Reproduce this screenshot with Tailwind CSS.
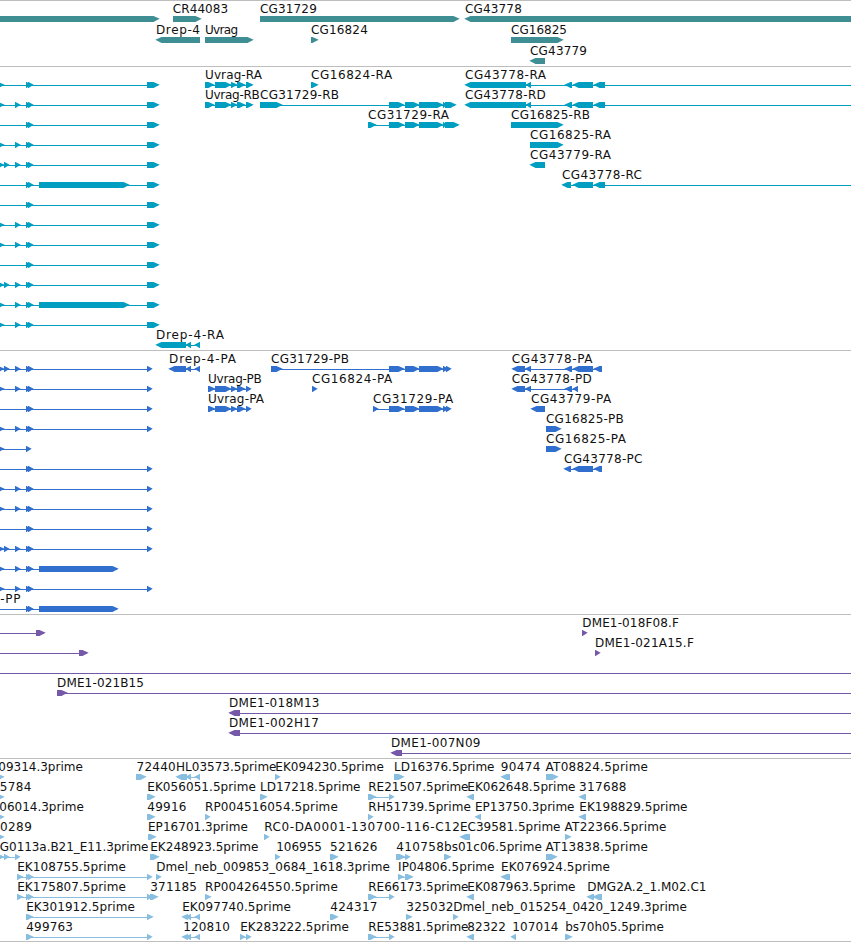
<!DOCTYPE html>
<html lang="en">
<head>
  <meta charset="UTF-8">
  <meta name="viewport" content="width=device-width, initial-scale=1.0">
  <title>Genome Browser</title>
  <script src="https://cdn.jsdelivr.net/npm/@tailwindcss/browser@4"></script>
</head>
<body class="bg-white overflow-hidden">
  <main class="flex flex-col w-[851px] h-[942px] border-b border-[#bebebe] overflow-hidden font-['DejaVu_Sans',sans-serif]">
    <section id="genes" class="h-[66px] shrink-0 border-t border-[#bebebe] text-[#3e8e94]"></section>
    <section id="transcripts" class="h-[284px] shrink-0 border-t border-[#bebebe] text-[#009fc2]"></section>
    <section id="proteins" class="h-[264px] shrink-0 border-t border-[#bebebe] text-[#306fce]"></section>
    <section id="bacs" class="h-[144px] shrink-0 border-t border-[#bebebe] text-[#7558a8]"></section>
    <section id="ests" class="h-[183px] shrink-0 border-t border-[#bebebe] text-[#88bedf]"></section>
  </main>

<script>
// Feature: [row, strand, exons, label, labelLeft, labelRight, spanEnd]
const R = 1, L = -1;
const OUT = 860; // past the right edge of the view

// Exons shared by several features
const E0 = [-2, 4], E4 = [4, 9], E15 = [15, 20];
const E26 = [[26, 31], [28, 33]];
const END_T = [147, 159], END_P = [147, 152];
const LONG_T = [39, 129], LONG_P = [39, 118];
const OFF = [-20, -15];
const cg31729 = [[389, 404], [405, 419], [419, 443]];
const cg43778 = [[565, 572], [573, 593], [594, 605]];
const uvrag = [[215, 231], [231, 237], [237, 245]];
const drep = [[186, 191], [195, 200]];

const tracks = {
  genes: { pitch: 21, features: [
    [0, R, [[-20, 159]]],
    [0, R, [[173, 201]], 'CR44083', 173.5, 227.7],
    [0, R, [[260, 459]], 'CG31729', 260.7, 316.3],
    [0, L, [[465, OUT]], 'CG43778', 465.7, 521.3],
    [1, L, [[156, 200]], 'Drep-4', 156.7, 199.5],
    [1, R, [[205, 253]], 'Uvrag', 205.7, 237.5],
    [1, R, [[311, 318]], 'CG16824', 311.7, 367.3],
    [1, R, [[511, 563]], 'CG16825', 511.7, 566.5],
    [2, L, [[530, 545]], 'CG43779', 530.7, 586.5],
  ]},
  transcripts: { pitch: 20, features: [
    [0, R, [OFF, E0, ...E26, END_T]],
    [1, R, [OFF, E0, E15, ...E26, END_T]],
    [2, R, [OFF, ...E26, END_T]],
    [3, R, [OFF, E0, E15, ...E26, END_T]],
    [4, R, [OFF, E0, E4, E15, ...E26, END_T]],
    [5, R, [OFF, ...E26, LONG_T, END_T]],
    [6, R, [OFF, ...E26, END_T]],
    [7, R, [OFF, E0, E15, ...E26, END_T]],
    [8, R, [OFF, E0, E15, ...E26, END_T]],
    [9, R, [OFF, ...E26, END_T]],
    [10, R, [OFF, E0, E4, E15, ...E26, END_T]],
    [11, R, [OFF, E0, E15, ...E26, LONG_T, END_T]],
    [12, R, [OFF, E0, E15, ...E26, END_T]],
    [13, L, [[156, 186], ...drep], 'Drep-4-RA', 156.7, 223.5],
    [0, R, [[205, 214], ...uvrag, [246, 253]], 'Uvrag-RA', 205.7, 261.5],
    [0, R, [[311, 318]], 'CG16824-RA', 311.7, 391.7],
    [0, L, [[465, 526], [526, 531], ...cg43778], 'CG43778-RA', 465.7, 545.5, OUT],
    [1, R, [[205, 214], ...uvrag, [246, 253]], 'Uvrag-RB', 205.7, 259.3],
    [1, R, [[260, 282], ...cg31729, [443, 446], [445, 456]], 'CG31729-RB', 260.7, 338.5],
    [1, L, [[465, 526], [526, 531], ...cg43778], 'CG43778-RD', 465.7, 545.3, OUT],
    [2, R, [[368, 376], ...cg31729, [443, 446], [445, 459]], 'CG31729-RA', 368.7, 448.5],
    [2, R, [[511, 563]], 'CG16825-RB', 511.7, 589.5],
    [3, R, [[530, 563]], 'CG16825-RA', 530.7, 610.5],
    [4, L, [[530, 545]], 'CG43779-RA', 530.7, 610.5],
    [5, L, [[562, 571], [573, 593], [594, 605]], 'CG43778-RC', 562.7, 641.5, OUT],
  ]},
  proteins: { pitch: 20, features: [
    [0, R, [OFF, E0, E4, E15, ...E26, END_P]],
    [1, R, [OFF, E0, E15, ...E26, END_P]],
    [2, R, [OFF, ...E26, END_P]],
    [3, R, [OFF, E0, E15, ...E26, END_P]],
    [4, R, [OFF, E0, [26, 31]]],
    [5, R, [OFF, ...E26, END_P]],
    [6, R, [OFF, E0, E15, ...E26, END_P]],
    [7, R, [OFF, E0, E15, ...E26, END_P]],
    [8, R, [OFF, ...E26, END_P]],
    [9, R, [OFF, E0, E4, E15, ...E26, END_P]],
    [10, R, [OFF, E0, E15, ...E26, LONG_P]],
    [11, R, [OFF, E0, E15, ...E26, END_P]],
    [12, R, [OFF, ...E26, LONG_P], '-PP', 1, 20],
    [0, L, [[169, 186], ...drep], 'Drep-4-PA', 169.7, 235.5],
    [0, R, [[271, 282], ...cg31729, [443, 448], [446, 451]], 'CG31729-PB', 271.7, 348.5],
    [0, L, [[512, 525], [525, 531], [565, 572], [573, 593], [594, 602]], 'CG43778-PA', 512.5, 592],
    [1, R, [[208, 215], ...uvrag, [246, 251]], 'Uvrag-PB', 208.7, 261.3],
    [1, R, [[312, 317]], 'CG16824-PA', 312.7, 391.7],
    [1, L, [[512, 525], [525, 531], [565, 572], [573, 578]], 'CG43778-PD', 512.5, 591.3],
    [2, R, [[208, 215], ...uvrag, [246, 251]], 'Uvrag-PA', 208.7, 263.5],
    [2, R, [[373, 378], ...cg31729, [443, 448], [446, 451]], 'CG31729-PA', 373.7, 452.7],
    [2, L, [[531, 545]], 'CG43779-PA', 531.7, 610.7],
    [3, R, [[546, 561]], 'CG16825-PB', 546.7, 623.3],
    [4, R, [[546, 561]], 'CG16825-PA', 546.7, 625.5],
    [5, L, [[564, 571], [573, 593], [594, 602]], 'CG43778-PC', 564.7, 642],
  ]},
  bacs: { pitch: 20, features: [
    [0, R, [OFF, [36, 45]]],
    [0, R, [[582, 587]], 'DME1-018F08.F', 583, 678.3],
    [1, R, [OFF, [79, 88]]],
    [1, R, [[595, 600]], 'DME1-021A15.F', 595.7, 693.3],
    [2, R, [OFF], '', 0, 0, OUT],
    [3, R, [[57, 67]], 'DME1-021B15', 57.7, 143.5, OUT],
    [4, L, [[229, 240]], 'DME1-018M13', 229.7, 319, OUT],
    [5, L, [[229, 240]], 'DME1-002H17', 229.7, 318.5, OUT],
    [6, L, [[391, 402]], 'DME1-007N09', 391.7, 480, OUT],
  ]},
  ests: { pitch: 20, features: [
    [0, R, [E0], '09314.3prime', -1, 82.3],
    [0, R, [[136, 146]], '72440', 137.2, 175.2],
    [0, L, [[176, 187], ...drep], 'HL03573.5prime', 176.7, 276],
    [0, R, [[275, 280]], 'EK094230.5prime', 276, 383.3],
    [0, R, [[394, 404]], 'LD16376.5prime', 394.7, 494],
    [0, L, [[501, 510]], '90474', 501.5, 540],
    [0, R, [[546, 558]], 'AT08824.5prime', 546.3, 647.5],
    [1, R, [E0], '5784', 0.5, 31],
    [1, R, [[147, 155]], 'EK056051.5prime', 148, 255.3],
    [1, R, [[260, 267]], 'LD17218.5prime', 260.7, 360],
    [1, R, [[368, 376], [389, 394]], 'RE21507.5prime', 369, 468],
    [1, L, [[467, 474]], 'EK062648.5prime', 468, 575],
    [1, L, [[579, 586]], '317688', 579.7, 626],
    [2, R, [E0], '06014.3prime', 0, 83.3],
    [2, R, [[147, 155]], '49916', 148, 186],
    [2, R, [[205, 210]], 'RP004516054.5prime', 205.7, 337.3],
    [2, R, [[368, 373]], 'RH51739.5prime', 369, 470.3],
    [2, L, [[475, 481]], 'EP13750.3prime', 475.7, 574],
    [2, L, [[579, 586]], 'EK198829.5prime', 580, 687],
    [3, R, [E0], '0289', 0.7, 31.3],
    [3, R, [[148, 156]], 'EP16701.3prime', 148.7, 247.3],
    [3, R, [[264, 269]], 'RC0-DA0001-130700-116-C12', 264.9, 459.5],
    [3, L, [[460, 470]], 'EC39581.5prime', 460.7, 560],
    [3, R, [[565, 571]], 'AT22366.5prime', 565.3, 666],
    [4, R, [E0, E4, E15], 'G0113a.B21_E11.3prime', 0.5, 148],
    [4, R, [[150, 159]], 'EK248923.5prime', 150.9, 258],
    [4, R, [[275, 280]], '106955', 276.9, 321.5],
    [4, R, [[330, 338]], '521626', 330.7, 377],
    [4, R, [[396, 405], [405, 410]], '410758', 397, 443.3],
    [4, R, [[444, 451]], 'bs01c06.5prime', 444.7, 541.3],
    [4, R, [[546, 557]], 'AT13838.5prime', 546.3, 647.5],
    [5, R, [[17, 23], ...E26, END_P], 'EK108755.5prime', 17.9, 125.3],
    [5, R, [[156, 161]], 'Dmel_neb_009853_0684_1618.3prime', 156.9, 389.3],
    [5, R, [[398, 404], [405, 413]], 'IP04806.5prime', 398.7, 494],
    [5, L, [[501, 510]], 'EK076924.5prime', 501.7, 609.3],
    [6, R, [[17, 23], ...E26, END_P], 'EK175807.5prime', 17.9, 125.3],
    [6, R, [[150, 158]], '371185', 151, 196.5],
    [6, R, [[205, 211]], 'RP004264550.5prime', 205.7, 337.3],
    [6, R, [[368, 376], [389, 394]], 'RE66173.5prime', 369, 468],
    [6, L, [[467, 474]], 'EK087963.5prime', 468, 575],
    [6, L, [[587, 594], [593, 602]], 'DMG2A.2_1.M02.C1', 587.9, 706],
    [7, R, [[26, 33], [147, 153]], 'EK301912.5prime', 26.9, 134.3],
    [7, L, [[182, 188], ...drep], 'EK097740.5prime', 182.9, 290.3],
    [7, R, [[330, 338]], '424317', 331, 377],
    [7, R, [[406, 412]], '325032', 407, 453],
    [7, R, [[453, 458]], 'Dmel_neb_015254_0420_1249.3prime', 453.9, 686.5],
    [8, R, [[26, 33], END_P], '499763', 27, 72.5],
    [8, L, [[182, 188], ...drep], '120810', 184, 229.3],
    [8, R, [[240, 245], [246, 251]], 'EK283222.5prime', 240.9, 348.3],
    [8, R, [[368, 376], [389, 394]], 'RE53881.5prime', 369, 468],
    [8, L, [[467, 474]], '82322', 467.9, 505.3],
    [8, L, [[511, 516]], '107014', 512.9, 558],
    [8, R, [[565, 572]], 'bs70h05.5prime', 565.9, 663.3],
  ]},
};

// Block with an arrow head on its downstream end
function exonPath([a, b], strand, y) {
  const head = Math.min(6, b - a);
  return strand === R
    ? `M${a} ${y}H${b - head + 0.5}L${b + 0.7} ${y + 2.8}L${b - head + 0.5} ${y + 6}H${a}Z`
    : `M${b} ${y}H${a + head - 0.5}L${a - 0.7} ${y + 2.8}L${a + head - 0.5} ${y + 6}H${b}Z`;
}

function drawFeature([row, strand, exons, label, left, right, end], pitch) {
  const y = 15 + row * pitch;
  const start = exons[0][0];
  const stop = end || exons[exons.length - 1][1];
  let out = '';
  if (exons.length > 1 || end) {
    out += `<rect x="${start + 1}" y="${y + 3}" width="${stop - start - 2}" height="1"/>`;
  }
  // one path per exon, so opposite windings never cancel where they overlap
  out += exons.map(e => `<path d="${exonPath(e, strand, y)}"/>`).join('');
  if (label) {
    out += `<text x="${(left - 0.7).toFixed(1)}" y="${y - 3}" textLength="${(right - left + 1.2).toFixed(1)}" class="fill-[#111] text-[12px]">${label}</text>`;
  }
  return out;
}

for (const [id, track] of Object.entries(tracks)) {
  document.getElementById(id).innerHTML =
    `<svg class="block w-full h-full fill-current">
      ${track.features.map(f => drawFeature(f, track.pitch)).join('')}
    </svg>`;
}
</script>
</body>
</html>
